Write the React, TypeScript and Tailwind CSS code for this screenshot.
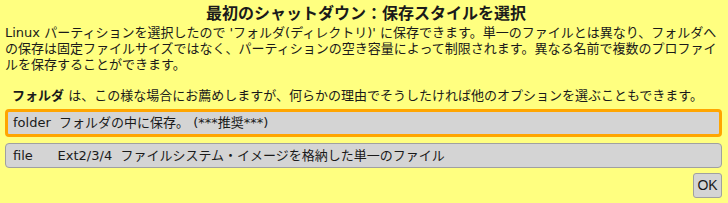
export default function App() {
  const font = "font-['DejaVu_Sans','Noto_Sans_CJK_JP',sans-serif]";
  return (
    <div className={`w-[728px] h-[203px] bg-[#ffff80] text-[#1a1a1a] ${font} flex flex-col pl-[5px] pr-[6px] overflow-hidden`}>
      <h1 className="text-center font-bold text-[16px] leading-[20px] mt-[4px] pl-[5px]">
        最初のシャットダウン：保存スタイルを選択
      </h1>
      <p className="text-[13px] leading-[16px] mt-[1px] -mr-[2px]">
        Linux パーティションを選択したので 'フォルダ(ディレクトリ)' に保存できます。単一のファイルとは異なり、フォルダへの保存は固定ファイルサイズではなく、パーティションの空き容量によって制限されます。異なる名前で複数のプロファイルを保存することができます。
      </p>
      <p className="text-[13px] leading-[16px] mt-[15px] pl-[7px]">
        <b>フォルダ</b> は、この様な場合にお薦めしますが、何らかの理由でそうしたければ他のオプションを選ぶこともできます。
      </p>
      <button className="mt-[5px] h-[28px] w-full rounded-[4px] border-[3px] border-[#ffa500] bg-[#d4d4d4] text-left pl-[5px] text-[13px] whitespace-pre">
        folder  フォルダの中に保存。 (***推奨***)
      </button>
      <button className="mt-[6px] h-[25px] w-full rounded-[4px] border border-[#a0a0a0] bg-[#d4d4d4] text-left pl-[7px] text-[13px] whitespace-pre">
        file      Ext2/3/4  ファイルシステム・イメージを格納した単一のファイル
      </button>
      <div className="flex justify-end mt-[5px]">
        <button className="h-[25px] w-[29px] rounded-[3px] border border-[#a0a0a0] bg-[#d4d4d4] text-[14px] font-['Liberation_Sans',sans-serif]">
          OK
        </button>
      </div>
    </div>
  );
}
